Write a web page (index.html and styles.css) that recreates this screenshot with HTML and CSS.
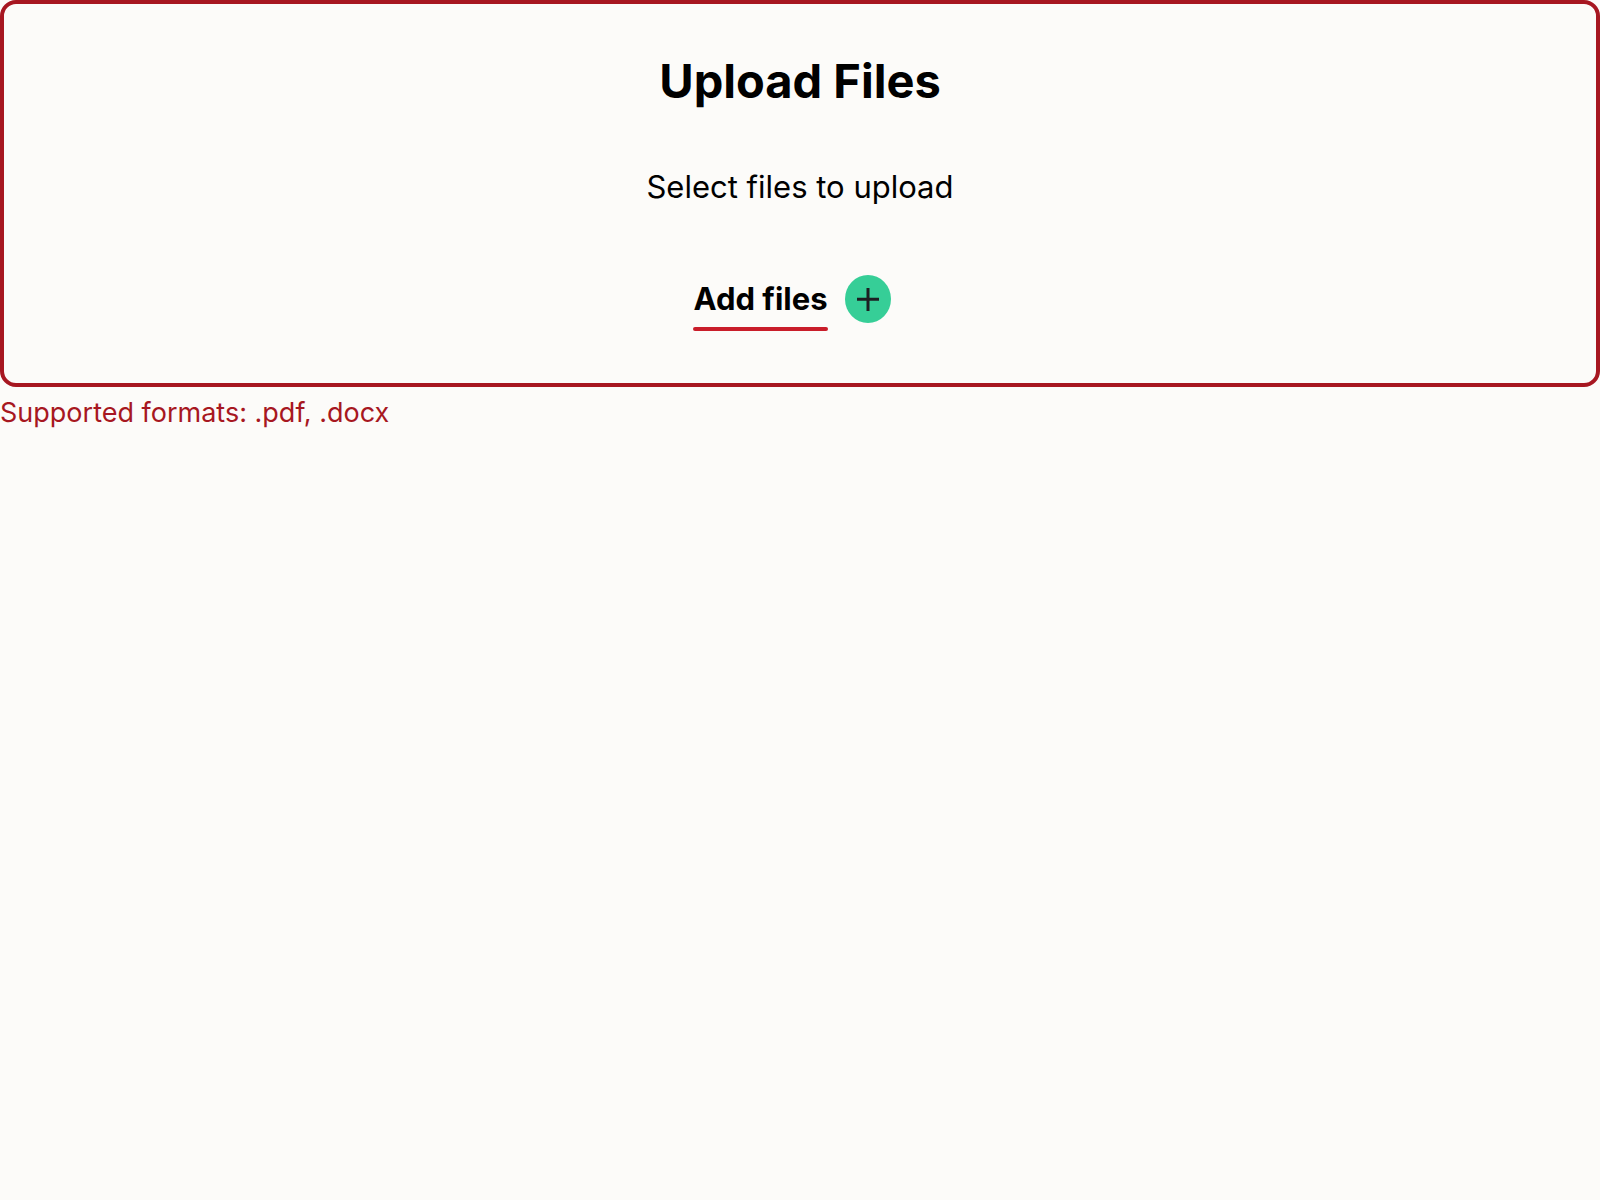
FILE: index.html
```html
<!DOCTYPE html>
<html lang="en">
<head>
<meta charset="utf-8">
<meta name="viewport" content="width=device-width, initial-scale=1">
<title>Upload Files</title>
<link rel="stylesheet" href="styles.css">
</head>
<body>
<main>
<section class="upload">
<h1 class="title">Upload Files</h1>
<p class="hint">Select files to upload</p>
<button class="add" type="button">
<span class="add-label">Add files</span>
<svg class="add-icon" viewBox="0 0 46 48" aria-hidden="true"><ellipse cx="23" cy="24" rx="23" ry="24" fill="#36ce97"/><path d="M23 13v23M12 24.2h22" fill="none" stroke="#1d1f22" stroke-width="3"/></svg>
</button>
</section>
<p class="formats">Supported formats: .pdf, .docx</p>
</main>
</body>
</html>
```
FILE: styles.css
```css
* { box-sizing: border-box; }
body { margin: 0; background: #fcfbf9; color: #000; font-family: Inter, sans-serif; }
.upload {
  display: flex;
  flex-direction: column;
  align-items: center;
  padding: 45px 16px 52px;
  border: 4px solid #a71721;
  border-radius: 16px;
}
.title { margin: 0; font-size: 47px; line-height: 64px; font-weight: 700; }
.hint { margin: 52px 0 66px; font-size: 31px; line-height: 44px; }
.add {
  display: flex;
  gap: 17px;
  padding: 0 16px 0 0;
  border: 0;
  background: none;
  color: inherit;
  font: 700 31px/48px Inter, sans-serif;
  cursor: pointer;
}
.add-label::after { content: ""; display: block; height: 4px; margin-top: 4px; border-radius: 2px; background: #c91d2a; }
.add-icon { width: 46px; height: 48px; }
.formats { margin: 8px 0 0; color: #a71721; font-size: 27px; line-height: 36px; }
```
